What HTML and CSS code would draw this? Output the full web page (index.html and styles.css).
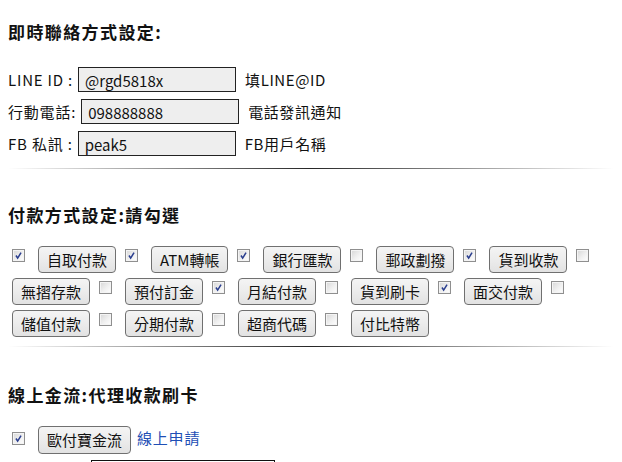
FILE: index.html
```html
<!DOCTYPE html>
<html lang="zh-Hant">
<head>
<meta charset="utf-8">
<title>設定</title>
<link rel="stylesheet" href="styles.css">
</head>
<body>
<div class="page">
  <h2 class="title t1">即時聯絡方式設定:</h2>
  <div class="fields">
    <div class="field"><span class="lbl">LINE ID :</span><input class="box" type="text" value="@rgd5818x"><span class="hint">填LINE@ID</span></div>
    <div class="field"><span class="lbl">行動電話:</span><input class="box" type="text" value="098888888"><span class="hint">電話發訊通知</span></div>
    <div class="field"><span class="lbl">FB 私訊 :</span><input class="box" type="text" value="peak5"><span class="hint">FB用戶名稱</span></div>
  </div>
  <hr class="fade hr1">
  <h2 class="title t2">付款方式設定:請勾選</h2>
  <div class="pay">
    <span class="cb on"><svg viewBox="0 0 13 13"><path d="M3.5 6.5 L5.5 9.5 L9.5 3.2" /></svg></span><button class="btn">自取付款</button>
    <span class="cb on"><svg viewBox="0 0 13 13"><path d="M3.5 6.5 L5.5 9.5 L9.5 3.2" /></svg></span><button class="btn">ATM轉帳</button>
    <span class="cb on"><svg viewBox="0 0 13 13"><path d="M3.5 6.5 L5.5 9.5 L9.5 3.2" /></svg></span><button class="btn">銀行匯款</button>
    <span class="cb"></span><button class="btn">郵政劃撥</button>
    <span class="cb on"><svg viewBox="0 0 13 13"><path d="M3.5 6.5 L5.5 9.5 L9.5 3.2" /></svg></span><button class="btn">貨到收款</button>
    <span class="cb"></span><button class="btn">無摺存款</button>
    <span class="cb"></span><button class="btn">預付訂金</button>
    <span class="cb on"><svg viewBox="0 0 13 13"><path d="M3.5 6.5 L5.5 9.5 L9.5 3.2" /></svg></span><button class="btn">月結付款</button>
    <span class="cb"></span><button class="btn">貨到刷卡</button>
    <span class="cb on"><svg viewBox="0 0 13 13"><path d="M3.5 6.5 L5.5 9.5 L9.5 3.2" /></svg></span><button class="btn">面交付款</button>
    <span class="cb"></span><button class="btn">儲值付款</button>
    <span class="cb"></span><button class="btn">分期付款</button>
    <span class="cb"></span><button class="btn">超商代碼</button>
    <span class="cb"></span><button class="btn">付比特幣</button>
  </div>
  <hr class="fade hr2">
  <h2 class="title t3">線上金流:代理收款刷卡</h2>
  <div class="flow">
    <span class="cb on"><svg viewBox="0 0 13 13"><path d="M3.5 6.5 L5.5 9.5 L9.5 3.2" /></svg></span><button class="btn">歐付寶金流</button><a class="apply" href="#">線上申請</a>
  </div>
  <div class="more"><input class="plain" type="text" value=""></div>
</div>
</body>
</html>
```

FILE: styles.css
```css
html, body {
  margin: 0;
  padding: 0;
  background: #ffffff;
}
body {
  font-family: "Noto Sans CJK TC", "Noto Sans", sans-serif;
  color: #111111;
  font-size: 15px;
  overflow: hidden;
}
.page {
  padding: 0 8px;
}
.title {
  margin: 0;
  font-size: 17px;
  line-height: 24px;
  font-weight: bold;
  letter-spacing: 1.4px;
  color: #111111;
}
.t1 { padding-top: 20px; }
.t2 { margin-top: 34px; }
.t3 { margin-top: 36px; }

.fields {
  margin-top: 23px;
  display: flex;
  flex-direction: column;
  gap: 7px;
}
.field {
  display: flex;
  align-items: center;
  height: 25px;
}
.lbl {
  margin-right: 5px;
  letter-spacing: 0.8px;
}
.box {
  box-sizing: border-box;
  width: 158px;
  height: 25px;
  border: 1px solid #222222;
  background: #eeeeee;
  padding: 1px 6px 0;
  font-family: "Noto Sans CJK TC", "Noto Sans", sans-serif;
  font-size: 15px;
  color: #111111;
  margin: 0;
}
.hint {
  margin-left: 9px;
  letter-spacing: 0.6px;
}
.fade {
  border: 0;
  height: 1px;
  margin: 0;
  background: linear-gradient(to right, rgba(0,0,0,0), rgba(0,0,0,0.85), rgba(0,0,0,0));
}
.hr1 { margin-top: 12px; }
.hr2 { margin-top: 9px; }

.pay {
  margin-top: 19px;
  padding-left: 4px;
  display: flex;
  flex-wrap: wrap;
  align-items: flex-start;
  row-gap: 5px;
}
.cb {
  box-sizing: border-box;
  width: 13px;
  height: 13px;
  margin-top: 3px;
  margin-right: 13px;
  border: 1px solid #8f8f8f;
  background: linear-gradient(135deg, #d6d6d6 0%, #f0f0f0 55%, #ffffff 100%);
  box-shadow: inset 0 0 0 1px #f4f4f4;
  display: inline-block;
  flex: none;
}
.cb svg {
  display: block;
  width: 11px;
  height: 11px;
}
.cb svg path {
  fill: none;
  stroke: #2b3f8f;
  stroke-width: 1.8;
}
.btn {
  box-sizing: border-box;
  height: 27px;
  padding: 0 8px;
  margin: 0 9px 0 0;
  border: 1px solid #707070;
  border-radius: 4px;
  background: linear-gradient(to bottom, #f4f4f4 0%, #ececec 50%, #e2e2e2 100%);
  font-family: "Noto Sans CJK TC", "Noto Sans", sans-serif;
  font-size: 15px;
  line-height: 18px;
  letter-spacing: 0;
  color: #111111;
  flex: none;
}
.flow {
  margin-top: 19px;
  padding-left: 4px;
  display: flex;
  align-items: flex-start;
}
.flow .cb { margin-top: 6px; }
.flow .btn { height: 28px; margin-right: 6px; }
.apply {
  color: #1f4fb5;
  text-decoration: none;
  line-height: 24px;
  letter-spacing: 0.8px;
}
.more {
  margin-top: 5px;
  padding-left: 83px;
}
.plain {
  box-sizing: border-box;
  width: 184px;
  height: 24px;
  border: 1px solid #111111;
  background: #ffffff;
  margin: 0;
}
```
